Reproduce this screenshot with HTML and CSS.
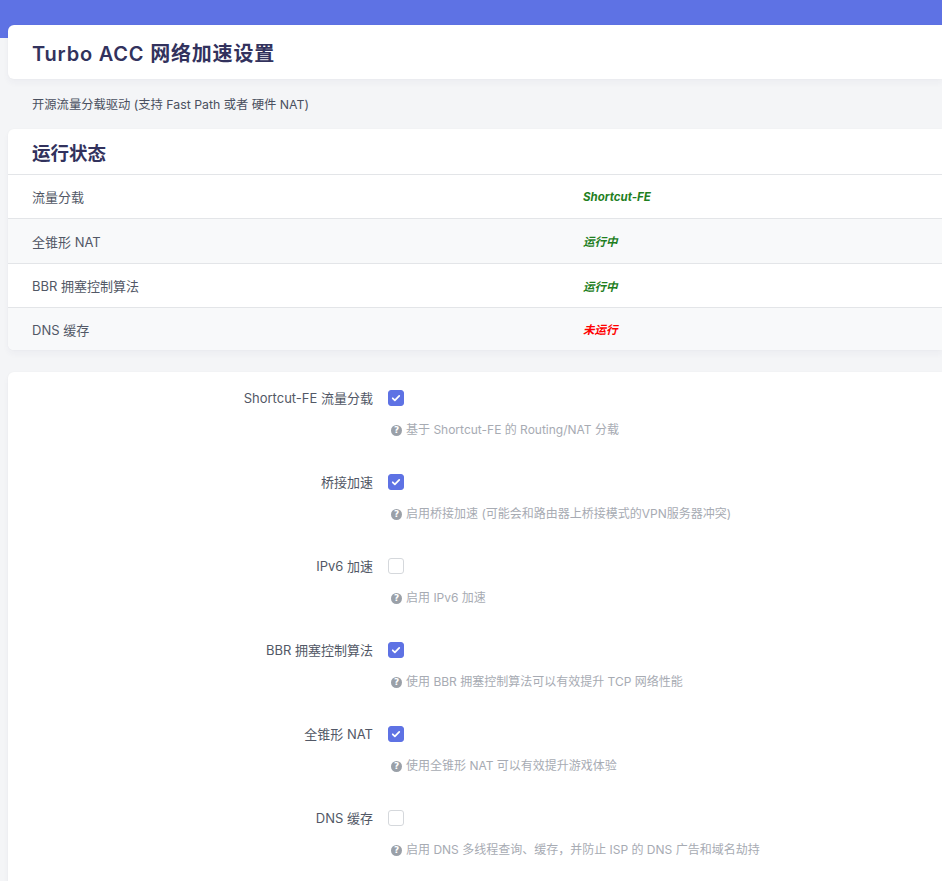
FILE: index.html
```html
<!DOCTYPE html>
<html lang="zh-CN">
<head>
<meta charset="utf-8">
<title>Turbo ACC 网络加速设置</title>
<link rel="stylesheet" href="styles.css">
</head>
<body>
<div class="topbar"></div>
<main class="main">
  <section class="card title-card">
    <h2 class="page-title">Turbo ACC 网络加速设置</h2>
  </section>
  <p class="page-desc">开源流量分载驱动 (支持 Fast Path 或者 硬件 NAT)</p>

  <section class="card status-card">
    <h3 class="status-title">运行状态</h3>
    <div class="status-table">
      <div class="status-row">
        <div class="status-label">流量分载</div>
        <div class="status-value ok">Shortcut-FE</div>
      </div>
      <div class="status-row alt tall">
        <div class="status-label">全锥形 NAT</div>
        <div class="status-value ok">运行中</div>
      </div>
      <div class="status-row">
        <div class="status-label">BBR 拥塞控制算法</div>
        <div class="status-value ok">运行中</div>
      </div>
      <div class="status-row alt last">
        <div class="status-label">DNS 缓存</div>
        <div class="status-value bad">未运行</div>
      </div>
    </div>
  </section>

  <section class="card form-card">
    <div class="form-row">
      <label class="form-label">Shortcut-FE 流量分载</label>
      <span class="cbox checked"><svg viewBox="0 0 16 16"><path d="M4.3 8.3l2.4 2.3 5-5" /></svg></span>
      <div class="help"><span class="qicon">?</span>基于 Shortcut-FE 的 Routing/NAT 分载</div>
    </div>
    <div class="form-row">
      <label class="form-label">桥接加速</label>
      <span class="cbox checked"><svg viewBox="0 0 16 16"><path d="M4.3 8.3l2.4 2.3 5-5" /></svg></span>
      <div class="help"><span class="qicon">?</span>启用桥接加速 (可能会和路由器上桥接模式的VPN服务器冲突)</div>
    </div>
    <div class="form-row">
      <label class="form-label">IPv6 加速</label>
      <span class="cbox"></span>
      <div class="help"><span class="qicon">?</span>启用 IPv6 加速</div>
    </div>
    <div class="form-row">
      <label class="form-label">BBR 拥塞控制算法</label>
      <span class="cbox checked"><svg viewBox="0 0 16 16"><path d="M4.3 8.3l2.4 2.3 5-5" /></svg></span>
      <div class="help"><span class="qicon">?</span>使用 BBR 拥塞控制算法可以有效提升 TCP 网络性能</div>
    </div>
    <div class="form-row">
      <label class="form-label">全锥形 NAT</label>
      <span class="cbox checked"><svg viewBox="0 0 16 16"><path d="M4.3 8.3l2.4 2.3 5-5" /></svg></span>
      <div class="help"><span class="qicon">?</span>使用全锥形 NAT 可以有效提升游戏体验</div>
    </div>
    <div class="form-row">
      <label class="form-label">DNS 缓存</label>
      <span class="cbox"></span>
      <div class="help"><span class="qicon">?</span>启用 DNS 多线程查询、缓存，并防止 ISP 的 DNS 广告和域名劫持</div>
    </div>
  </section>
</main>
</body>
</html>
```
FILE: styles.css
```css
* { box-sizing: border-box; }
html, body { margin: 0; padding: 0; }
body {
  background: #f4f5f7;
  font-family: Inter, "Noto Sans CJK SC", sans-serif;
  color: #525f7f;
  overflow: hidden;
}
.topbar {
  height: 38px;
  background: #5e72e4;
}
.main {
  margin-top: -13px;
  padding-left: 8px;
}
.card {
  background: #fff;
  border-radius: 6px 0 0 6px;
  box-shadow: 0 0 2px rgba(0,0,0,0.04), 0 4px 6px rgba(50,50,93,0.04);
}
.title-card {
  height: 54px;
  display: flex;
  align-items: center;
  padding-left: 24px;
}
.page-title {
  margin: 0;
  font-size: 20px;
  font-weight: 600;
  color: #32325d;
  letter-spacing: 0.8px;
}
.page-desc {
  margin: 0;
  height: 50px;
  display: flex;
  align-items: center;
  padding-left: 24px;
  font-size: 12.3px;
  color: #4a5060;
}
.status-title {
  margin: 0;
  height: 46px;
  display: flex;
  align-items: center;
  padding-left: 24px;
  font-size: 18.5px;
  font-weight: 700;
  color: #32325d;
  border-bottom: 1px solid #e3e5e8;
}
.status-row {
  display: grid;
  grid-template-columns: 575px 1fr;
  height: 44px;
  align-items: center;
  border-bottom: 1px solid #e3e5e8;
}
.status-row.tall { height: 45px; }
.status-row.alt { background: #f8f9fa; }
.status-row.last { border-bottom: none; height: 42px; border-radius: 0 0 0 6px; }
.status-label {
  padding-left: 24px;
  font-size: 13px;
  color: #525866;
}
.status-value {
  font-size: 11.5px;
  font-weight: 700;
  font-style: italic;
}
.status-value.ok { color: #1f7f1f; }
.status-value.bad { color: #f00; }
.form-card {
  margin-top: 22px;
  padding-top: 16px;
  min-height: 520px;
}
.form-row {
  display: grid;
  grid-template-columns: 365px 16px 1fr;
  column-gap: 15px;
  row-gap: 12px;
  align-items: center;
  margin-bottom: 32px;
}
.form-label {
  height: 20px;
  line-height: 20px;
  text-align: right;
  font-size: 13px;
  color: #525866;
}
.cbox {
  width: 16px;
  height: 16px;
  border: 1px solid #d5d8dc;
  border-radius: 3px;
  background: #fff;
  display: flex;
  align-items: center;
  justify-content: center;
}
.cbox.checked {
  background: #5e72e4;
  border-color: #5e72e4;
}
.cbox svg {
  width: 14px;
  height: 14px;
  fill: none;
  stroke: #fff;
  stroke-width: 2;
  stroke-linecap: round;
  stroke-linejoin: round;
}
.help {
  grid-column: 2 / 4;
  margin-left: 3px;
  height: 20px;
  line-height: 20px;
  font-size: 12px;
  color: #a7abb3;
  display: flex;
  align-items: center;
}
.qicon {
  width: 11px;
  height: 11px;
  border-radius: 50%;
  background: #9aa0a8;
  color: #fff;
  font-size: 9px;
  font-weight: 700;
  line-height: 11px;
  text-align: center;
  margin-right: 4px;
  font-family: "DejaVu Sans", sans-serif;
}
```
